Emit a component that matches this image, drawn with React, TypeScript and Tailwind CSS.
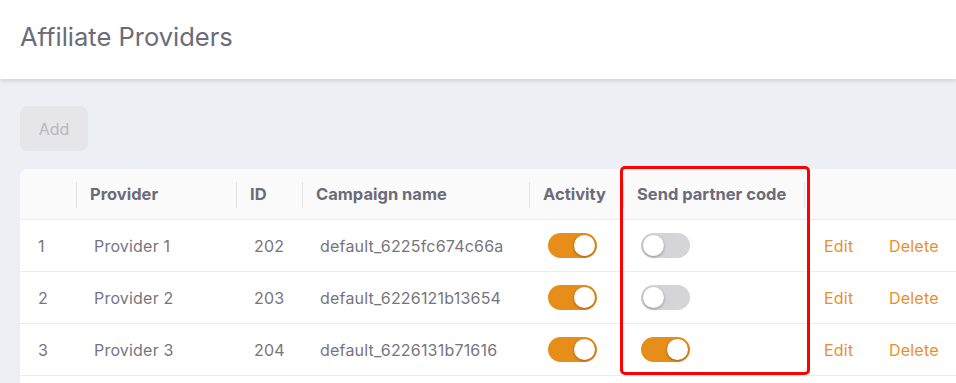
import { useState } from 'react';

type Row = { n: number; name: string; id: number; campaign: string; active: boolean; sendCode: boolean };

const initialRows: Row[] = [
  { n: 1, name: 'Provider 1', id: 202, campaign: 'default_6225fc674c66a', active: true, sendCode: false },
  { n: 2, name: 'Provider 2', id: 203, campaign: 'default_6226121b13654', active: true, sendCode: false },
  { n: 3, name: 'Provider 3', id: 204, campaign: 'default_6226131b71616', active: true, sendCode: true },
];

const Toggle = ({ on, onClick }: { on: boolean; onClick: () => void }) => (
  <button
    type="button"
    onClick={onClick}
    className={`relative flex h-[25px] w-[49px] items-center rounded-full ${on ? 'bg-[#e78e1a]' : 'bg-[#d5d4d9]'}`}
  >
    <span
      className={`absolute top-[2px] h-[21px] w-[21px] rounded-full bg-white shadow-[0_1px_3px_rgba(0,0,0,0.35)] ${on ? 'left-[26px]' : 'left-[2px]'}`}
    />
  </button>
);

const HeadCell = ({ children, width, sep = true }: { children?: React.ReactNode; width: string; sep?: boolean }) => (
  <div className={`relative flex h-full items-center pl-[14px] ${width}`}>
    {sep && <span className="absolute left-0 top-[13px] h-[26px] w-px bg-[#e3e3e6]" />}
    {children}
  </div>
);

const App = () => {
  const [rows, setRows] = useState(initialRows);

  const flip = (i: number, key: 'active' | 'sendCode') =>
    setRows((r) => r.map((row, j) => (j === i ? { ...row, [key]: !row[key] } : row)));

  return (
    <div className="min-h-screen overflow-hidden bg-[#eeeff4] font-['Inter','Liberation_Sans',sans-serif]">
      <div className="relative z-10 flex h-[79px] items-center bg-white px-5 pb-1 shadow-[0_2px_4px_rgba(0,0,0,0.12)]">
        <h1 className="text-[25.5px] font-normal text-[#6c6b78]">Affiliate Providers</h1>
      </div>

      <div className="px-5 pt-[27px]">
        <button
          type="button"
          disabled
          className="h-[45px] w-[68px] rounded-lg bg-[#e5e5ea] text-[16px] text-[#b9b7c1]"
        >
          Add
        </button>

        <div className="relative mt-[18px] w-[960px] rounded-tl-lg bg-white">
          <div className="flex h-[51px] items-center rounded-tl-lg border-b border-[#ececef] bg-[#fafafb] text-[16.5px] font-bold text-[#6c6b78]">
            <HeadCell width="w-[56px]" sep={false} />
            <HeadCell width="w-[160px]">Provider</HeadCell>
            <HeadCell width="w-[66px]">ID</HeadCell>
            <HeadCell width="w-[227px]">Campaign name</HeadCell>
            <HeadCell width="w-[94px]">Activity</HeadCell>
            <HeadCell width="w-[181px]">Send partner code</HeadCell>
            <HeadCell width="flex-1" />
          </div>

          {rows.map((row, i) => (
            <div key={row.n} className="flex h-[52px] items-center border-b border-[#ececef] text-[16px] tracking-[0.2px] text-[#76757f]">
              <div className="w-[56px] pl-[18px]">{row.n}</div>
              <div className="w-[160px] pl-[18px]">{row.name}</div>
              <div className="w-[66px] pl-[18px]">{row.id}</div>
              <div className="w-[227px] pl-[18px]">{row.campaign}</div>
              <div className="w-[94px] pl-[19px]">
                <Toggle on={row.active} onClick={() => flip(i, 'active')} />
              </div>
              <div className="w-[181px] pl-[18px]">
                <Toggle on={row.sendCode} onClick={() => flip(i, 'sendCode')} />
              </div>
              <div className="w-[85px] pl-[20px] text-[#e8902b]">Edit</div>
              <div className="text-[#e8902b]">Delete</div>
            </div>
          ))}
          <div className="h-[10px]" />

          <div className="pointer-events-none absolute left-[600px] top-[-3px] h-[209px] w-[190px] rounded-[5px] border-[3px] border-[#ff0000]" />
        </div>
      </div>
    </div>
  );
};

export default App;
